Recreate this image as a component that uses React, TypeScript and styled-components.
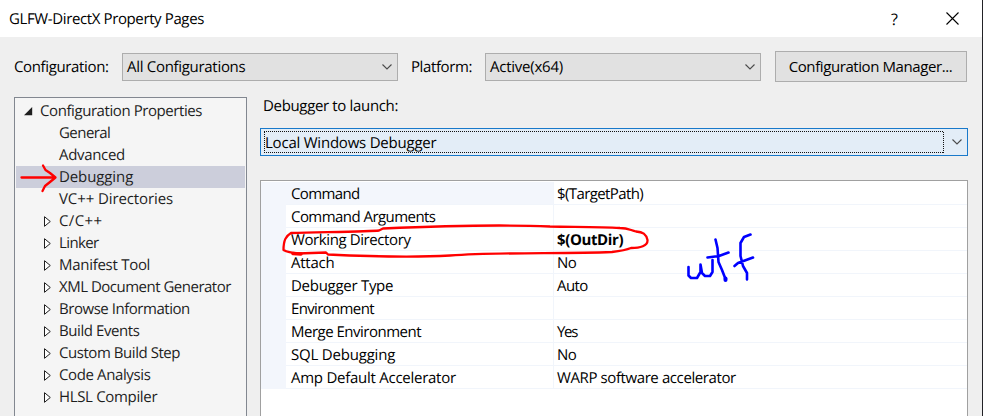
import React from "react";
import styled, { createGlobalStyle } from "styled-components";

const GlobalStyle = createGlobalStyle`
  html, body { margin: 0; overflow: hidden; background: #efefef; }
  *, *::before, *::after { box-sizing: border-box; }
`;

const Window = styled.div`
  position: relative;
  display: flex;
  flex-direction: column;
  width: 983px;
  height: 416px;
  overflow: hidden;
  background: #efefef;
  border-right: 1px solid #222226;
  font-family: "Open Sans", "Noto Sans", sans-serif;
  font-size: 15px;
  line-height: 22px;
  color: #000;
  white-space: nowrap;
  text-rendering: geometricPrecision;
`;

const Text = styled.span<{ $track: number; $bold?: boolean }>`
  letter-spacing: ${(p) => p.$track}px;
  font-weight: ${(p) => (p.$bold ? 700 : 400)};
`;

const TitleBar = styled.header`
  display: flex;
  align-items: center;
  height: 37px;
  flex: none;
  padding: 0 23px 0 9px;
  background: #fff;
`;

const TitleText = styled.div`
  flex: 1;
`;

const HelpMark = styled.div`
  width: 8px;
  margin-right: 47px;
  font-size: 16px;
`;

const Toolbar = styled.div`
  display: flex;
  align-items: center;
  height: 60px;
  flex: none;
  padding: 0 15px 0 14px;
`;

const FieldLabel = styled.label<{ $width: number }>`
  width: ${(p) => p.$width}px;
  flex: none;
`;

const Combo = styled.div<{ $gap: number }>`
  display: flex;
  align-items: center;
  justify-content: space-between;
  width: 276px;
  height: 28px;
  flex: none;
  margin-right: ${(p) => p.$gap}px;
  padding: 0 4px 0 4px;
  background: #e1e1e1;
  border: 1px solid #adadad;
`;

const ManagerButton = styled.button`
  width: 192px;
  height: 31px;
  flex: none;
  padding: 0 1px 2px 0;
  margin-top: -1px;
  background: #e1e1e1;
  border: 1px solid #adadad;
  font: inherit;
  color: inherit;
`;

const Body = styled.div`
  display: flex;
  flex: 1;
  gap: 13px;
  min-height: 0;
  padding: 0 14px;
`;

const Tree = styled.nav`
  width: 233px;
  flex: none;
  padding: 2px 1px;
  background: #f5f5f5;
  border: 1px solid #828790;
  border-bottom: 0;
  color: #1e1e1e;
`;

const TreeRow = styled.div<{ $depth: number; $selected?: boolean }>`
  display: flex;
  align-items: center;
  height: 22px;
  padding-left: ${(p) => (p.$depth ? 28 : 8)}px;
  background: ${(p) => (p.$selected ? "#cccedb" : "transparent")};
`;

const Marker = styled.span<{ $width: number }>`
  display: flex;
  width: ${(p) => p.$width}px;
  flex: none;
`;

const Main = styled.main`
  display: flex;
  flex-direction: column;
  width: 708px;
`;

const LaunchLabel = styled.label`
  height: 31px;
  padding: 0 0 0 3px;
  line-height: 18px;
`;

const LaunchCombo = styled.div`
  display: flex;
  align-items: center;
  height: 28px;
  flex: none;
  padding: 2px 4px 2px 3px;
  background: #e3edf7;
  border: 1px solid #1979ca;
`;

const FocusArea = styled.div`
  display: flex;
  align-items: center;
  flex: 1;
  height: 22px;
  margin-right: 7px;
  padding: 1px 0 0 1px;
  background:
    repeating-linear-gradient(90deg, #111 0 1px, transparent 1px 2px) 0 0 / 100% 1px no-repeat,
    repeating-linear-gradient(90deg, #111 0 1px, transparent 1px 2px) 0 100% / 100% 1px no-repeat,
    repeating-linear-gradient(0deg, #111 0 1px, transparent 1px 2px) 0 0 / 1px 100% no-repeat,
    repeating-linear-gradient(0deg, #111 0 1px, transparent 1px 2px) 100% 0 / 1px 100% no-repeat;
`;

const Grid = styled.section`
  flex: 1;
  margin-top: 24px;
  background: #fff;
  border: 1px solid #a0a0a0;
  border-bottom: 0;
  padding-top: 1px;
`;

const GridRow = styled.div`
  display: grid;
  grid-template-columns: 25px 267px 1fr;
  height: 23px;
  line-height: 24px;
`;

const Gutter = styled.div`
  background: #f3f6fc;
`;

const Cell = styled.div<{ $active?: boolean; $value?: boolean }>`
  height: 23px;
  padding-left: ${(p) => (p.$value ? 3 : 5)}px;
  border-bottom: 1px solid #f1f5fb;
  border-left: ${(p) => (p.$value ? "1px solid #f1f5fb" : "0")};
  background: ${(p) => (p.$active ? "#f3f6fc" : "#fff")};
`;

const InkLayer = styled.svg`
  position: absolute;
  inset: 0;
  pointer-events: none;
`;

const Chevron = () => (
  <svg width="12" height="8" viewBox="0 0 12 8" fill="none" stroke="#4b4b4b" strokeWidth="1.1">
    <path d="M1.5 1.5 6 6l4.5-4.5" />
  </svg>
);

const Close = () => (
  <svg width="13" height="13" viewBox="0 0 13 13" fill="none" stroke="#000" strokeWidth="1.1">
    <path d="M.5.5l12 12M12.500.5l-12 12" />
  </svg>
);

const Expanded = () => (
  <svg width="9" height="9" viewBox="0 0 9 9" fill="#1e1e1e">
    <path d="M8.200 0V8.200H0z" />
  </svg>
);

const Collapsed = () => (
  <svg width="8" height="11" viewBox="0 0 8 11" fill="#fff" stroke="#1e1e1e">
    <path d="M.5.700v9.600L6.300 5.500z" />
  </svg>
);

type TreeItem = { name: string; track: number; leaf?: boolean; selected?: boolean };

const treeItems: TreeItem[] = [
  { name: "General", track: -0.55, leaf: true },
  { name: "Advanced", track: -0.33, leaf: true },
  { name: "Debugging", track: -0.1, leaf: true, selected: true },
  { name: "VC++ Directories", track: -0.1, leaf: true },
  { name: "C/C++", track: 0.38 },
  { name: "Linker", track: -0.6 },
  { name: "Manifest Tool", track: -0.28 },
  { name: "XML Document Generator", track: -0.5 },
  { name: "Browse Information", track: -0.46 },
  { name: "Build Events", track: -0.42 },
  { name: "Custom Build Step", track: -0.45 },
  { name: "Code Analysis", track: -0.38 },
  { name: "HLSL Compiler", track: -0.33 },
];

type Property = { name: string; track: number; value?: string; valueTrack?: number; bold?: boolean };

const properties: Property[] = [
  { name: "Command", track: -0.62, value: "$(TargetPath)", valueTrack: -0.6 },
  { name: "Command Arguments", track: -0.55 },
  { name: "Working Directory", track: -0.4, value: "$(OutDir)", valueTrack: -0.37, bold: true },
  { name: "Attach", track: -0.24, value: "No", valueTrack: -0.6 },
  { name: "Debugger Type", track: -0.28, value: "Auto", valueTrack: -0.6 },
  { name: "Environment", track: -0.65 },
  { name: "Merge Environment", track: -0.5, value: "Yes", valueTrack: -1.3 },
  { name: "SQL Debugging", track: -0.2, value: "No", valueTrack: -0.6 },
  { name: "Amp Default Accelerator", track: -0.26, value: "WARP software accelerator", valueTrack: -0.4 },
];

const Annotations = () => (
  <InkLayer width="982" height="416" viewBox="0 0 982 416" fill="none" strokeLinecap="round" strokeLinejoin="round">
    <g stroke="#f00" strokeWidth="2.300">
      <path d="M21.500 177.500H54M43 165.500L45.500 170L50 173L55.500 177.500L50 182L45 186L42.500 191" />
      <path d="M379 230.500C372 231.500 330 232 291 233C286 236 283.500 240 283.500 250C287 252 292 253 298 253.500L326 252.500L328 254.500C360 256 405 258 450 255.500C500 252 560 254 612 252C620 251 626 250 631 248C640 248 648 246 647.500 240C646 234 643 232 636 231.500C630 230 628 228 620 228C600 226.500 575 227 550 226.500C505 224.500 450 225.500 383 228.500L379 230.500" />
      <path d="M293 253.500L301 254" strokeWidth="3.500" />
    </g>
    <g stroke="#00f" strokeWidth="2.600">
      <path d="M688.500 267V275.500L691 278H697L700.500 272V264.500L702 273L705 276H710L712.500 272V260" />
      <path d="M715.500 239.500L717.500 248L718.500 262L722 270L725.500 279M707.500 257.500L719 256L728.500 252.500" />
      <path d="M750.500 234.500L744 237L740.500 243V256L743 266L747 273V279.500M734.500 266L738 263L753 257.500" />
      <path d="M725.500 278.500v1.500" strokeWidth="4" />
    </g>
  </InkLayer>
);

export default function App() {
  return (
    <Window>
      <GlobalStyle />
      <TitleBar>
        <TitleText><Text $track={-0.38}>GLFW-DirectX Property Pages</Text></TitleText>
        <HelpMark>?</HelpMark>
        <Close />
      </TitleBar>
      <Toolbar>
        <FieldLabel $width={108}><Text $track={-0.36}>Configuration:</Text></FieldLabel>
        <Combo $gap={13}><Text $track={-0.3}>All Configurations</Text><Chevron /></Combo>
        <FieldLabel $width={74}><Text $track={-0.4}>Platform:</Text></FieldLabel>
        <Combo $gap={14}><Text $track={-0.24}>Active(x64)</Text><Chevron /></Combo>
        <ManagerButton><Text $track={-0.41}>Configuration Manager...</Text></ManagerButton>
      </Toolbar>
      <Body>
        <Tree>
          <TreeRow $depth={0}>
            <Marker $width={16}><Expanded /></Marker>
            <Text $track={-0.42}>Configuration Properties</Text>
          </TreeRow>
          {treeItems.map((item) => (
            <TreeRow key={item.name} $depth={1} $selected={item.selected}>
              <Marker $width={15}>{!item.leaf && <Collapsed />}</Marker>
              <Text $track={item.track}>{item.name}</Text>
            </TreeRow>
          ))}
        </Tree>
        <Main>
          <LaunchLabel><Text $track={-0.34}>Debugger to launch:</Text></LaunchLabel>
          <LaunchCombo>
            <FocusArea><Text $track={-0.22}>Local Windows Debugger</Text></FocusArea>
            <Chevron />
          </LaunchCombo>
          <Grid>
            {properties.map((p, i) => (
              <GridRow key={p.name}>
                <Gutter />
                <Cell $active={i === 0}><Text $track={p.track}>{p.name}</Text></Cell>
                <Cell $value><Text $track={p.valueTrack ?? 0} $bold={p.bold}>{p.value}</Text></Cell>
              </GridRow>
            ))}
          </Grid>
        </Main>
      </Body>
      <Annotations />
    </Window>
  );
}
